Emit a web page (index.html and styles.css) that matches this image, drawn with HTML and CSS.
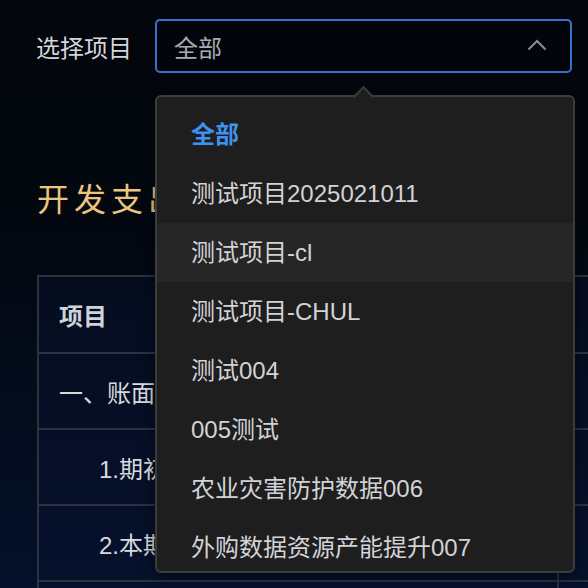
FILE: index.html
```html
<!DOCTYPE html>
<html lang="zh-CN">
<head>
    <meta charset="UTF-8">
    <meta name="viewport" content="width=device-width, initial-scale=1.0">
    <title>开发支出</title>
    <link rel="stylesheet" href="styles.css">
</head>
<body>
    <div class="page">
        <div class="filter-row">
            <label class="filter-label">选择项目</label>
            <div class="select">
                <span class="select-value">全部</span>
                <svg class="select-arrow" width="20" height="12" viewBox="0 0 20 12">
                    <polyline points="1.5,10.5 10,2 18.5,10.5" fill="none" stroke="#8b8e94" stroke-width="2"/>
                </svg>
            </div>
        </div>

        <h2 class="title">开发支出</h2>

        <table class="report">
            <colgroup>
                <col class="col-name">
                <col class="col-mid">
            </colgroup>
            <tr class="head">
                <td>项目</td>
                <td></td>
            </tr>
            <tr>
                <td>一、账面</td>
                <td></td>
            </tr>
            <tr>
                <td class="sub">1.期初</td>
                <td></td>
            </tr>
            <tr>
                <td class="sub">2.本期</td>
                <td></td>
            </tr>
            <tr>
                <td class="sub"></td>
                <td></td>
            </tr>
        </table>
    </div>

    <!-- open dropdown of the project select -->
    <div class="dropdown">
        <span class="dropdown-caret"></span>
        <ul class="options">
            <li class="option selected">全部</li>
            <li class="option">测试项目2025021011</li>
            <li class="option hover">测试项目-cl</li>
            <li class="option">测试项目-CHUL</li>
            <li class="option">测试004</li>
            <li class="option">005测试</li>
            <li class="option">农业灾害防护数据006</li>
            <li class="option">外购数据资源产能提升007</li>
        </ul>
    </div>
</body>
</html>
```

FILE: styles.css
```css
html, body {
    margin: 0;
    padding: 0;
    width: 100%;
    height: 100%;
    overflow: hidden;
}

body {
    background: linear-gradient(180deg, #03060c 0%, #030810 40%, #04102a 100%);
    color: #d6d8dc;
    font-family: 'Liberation Sans', 'Noto Sans CJK SC', sans-serif;
    font-size: 24px;
}

.page {
    padding: 19px 0 0 36px;
}

/* Filter */
.filter-row {
    display: flex;
    align-items: center;
    gap: 23px;
}

.filter-label {
    color: #d4d6da;
    white-space: nowrap;
}

.select {
    box-sizing: border-box;
    width: 417px;
    height: 54px;
    border: 2px solid #3674c8;
    border-radius: 5px;
    background: #02050b;
    display: flex;
    align-items: center;
    justify-content: space-between;
    padding: 0 23px 0 17px;
}

.select-value {
    color: #a9acb2;
}

.select-arrow {
    display: block;
    margin-top: -2px;
}

.title {
    margin: 111px 0 0 1px;
    font-size: 32px;
    font-weight: normal;
    line-height: 32px;
    letter-spacing: 5px;
    color: #ecc47e;
}

/* Table */
.report {
    margin: 59px 0 0 1px;
    border-collapse: collapse;
    width: 700px;
    background: linear-gradient(180deg, #050c1e 0%, #061230 100%);
}

.col-name { width: 520px; }

.report td {
    border: 2px solid #2c333f;
    height: 74px;
    padding: 0 0 0 20px;
    color: #d8dade;
    white-space: nowrap;
}

.report .head td {
    height: 75px;
    color: #cfd2d8;
    font-weight: bold;
}

.report td.sub {
    padding-left: 60px;
}

/* Dropdown */
.dropdown {
    position: absolute;
    top: 95px;
    left: 155px;
    width: 420px;
    height: 478px;
    box-sizing: border-box;
    border: 2px solid #3b3c3e;
    border-radius: 6px;
    background: #1e1e1f;
    box-shadow: 0 4px 14px rgba(0, 0, 0, 0.5);
}

.dropdown-caret {
    position: absolute;
    top: -8px;
    left: 199px;
    width: 13px;
    height: 13px;
    background: #1e1e1f;
    border-top: 2px solid #3b3c3e;
    border-left: 2px solid #3b3c3e;
    transform: rotate(45deg);
}

.options {
    list-style: none;
    margin: 0;
    padding: 8px 0 0;
    height: 100%;
    box-sizing: border-box;
    overflow: hidden;
    border-radius: 6px;
}

.option {
    height: 59px;
    line-height: 59px;
    padding-left: 34px;
    color: #d2d3d6;
    white-space: nowrap;
}

.option.selected {
    color: #3f92f0;
    font-weight: bold;
}

.option.hover {
    background: #262627;
}
```
